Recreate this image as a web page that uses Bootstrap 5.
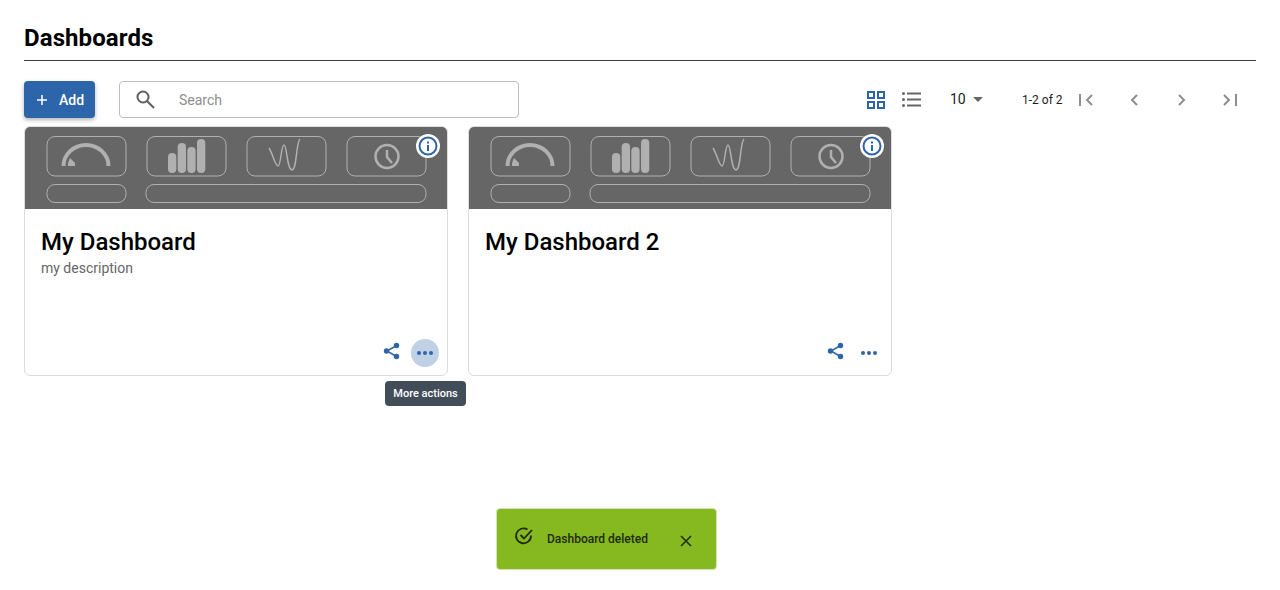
<!DOCTYPE html>
<html lang="en">

<head>
    <meta charset="UTF-8">
    <meta name="viewport" content="width=device-width, initial-scale=1.0">
    <title>Dashboards</title>
    <link href="https://cdn.jsdelivr.net/npm/bootstrap@5.3.0/dist/css/bootstrap.min.css" rel="stylesheet">
    <style>
        body {
            font-family: Roboto, "Liberation Sans", sans-serif;
            background: #fff;
            color: #000;
        }

        .page-wrap {
            padding: 0 24px;
        }

        .page-head {
            height: 61px;
            border-bottom: 1px solid #3c3c3c;
            padding-top: 21px;
        }

        .page-head h1 {
            font-size: 24px;
            line-height: 32px;
            font-weight: 700;
            letter-spacing: .1px;
            margin: 1px 0 0;
        }

        .tool-row {
            margin-top: 20px;
            height: 37px;
            margin-bottom: 8px;
        }

        .add-btn {
            width: 71px;
            height: 37px;
            background: #2c65aa;
            color: #fff;
            border: 0;
            border-radius: 4px;
            font-size: 14px;
            font-weight: 500;
            box-shadow: 0 2px 4px rgba(0, 0, 0, .3);
            gap: 11px;
            padding: 0 0 0 12px;
        }

        .add-btn span,
        .search-box span {
            padding-top: 2px;
        }

        .search-box {
            width: 400px;
            height: 37px;
            margin-left: 24px;
            border: 1px solid #bdbdbd;
            border-radius: 4px;
            padding-left: 15px;
            gap: 23px;
            font-size: 14px;
            color: #8e8e8e;
        }

        .view-group {
            gap: 17px;
        }

        .per-page {
            font-size: 14px;
            color: #212121;
            width: 36px;
            margin-left: 29px;
            gap: 7px;
        }

        .range-text {
            font-size: 12px;
            color: #1c1c1c;
            margin-left: 36px;
            width: 40px;
            white-space: nowrap;
        }

        .pager {
            margin-right: 2px;
        }

        .pager-cell {
            width: 48px;
            height: 37px;
        }

        .tile-row {
            gap: 20px;
        }

        .dash-tile {
            width: 424px;
            height: 250px;
            border: 1px solid #dcdcdc;
            border-radius: 6px;
            position: relative;
            background: #fff;
        }

        .tile-thumb {
            height: 82px;
            background: #666;
            border-radius: 5px 5px 0 0;
            display: block;
        }

        .info-dot {
            position: absolute;
            top: 7px;
            right: 7px;
            width: 24px;
            height: 24px;
        }

        .tile-body {
            padding: 17px 16px 0;
        }

        .tile-body h2 {
            font-size: 24px;
            line-height: 32px;
            font-weight: 500;
            margin: 0;
        }

        .tile-body p {
            font-size: 14px;
            line-height: 20px;
            color: #666;
            margin: 0;
        }

        .tile-actions {
            position: absolute;
            right: 8px;
            bottom: 8px;
            gap: 6px;
        }

        .act-btn {
            width: 28px;
            height: 28px;
            border-radius: 50%;
            border: 0;
            background: transparent;
            padding: 0;
        }

        .act-btn.is-hover {
            background: #c0d1e6;
        }

        .hint-bubble {
            position: fixed;
            left: 385px;
            top: 381px;
            width: 81px;
            height: 25px;
            background: #424d5a;
            color: #fff;
            font-size: 11px;
            font-weight: 500;
            line-height: 25px;
            text-align: center;
            border-radius: 4px;
            white-space: nowrap;
        }

        .snack {
            position: fixed;
            left: 496px;
            top: 508px;
            width: 221px;
            height: 62px;
            background: #86b81f;
            border: 1px solid #d5e2b5;
            border-radius: 4px;
            font-size: 12px;
            font-weight: 500;
            color: #1d2a0c;
        }

        .snack svg {
            position: absolute;
        }

        .snack-check {
            left: 17px;
            top: 17px;
        }

        .snack-close {
            left: 182px;
            top: 25px;
        }

        .snack span {
            position: absolute;
            left: 50px;
            top: 22px;
            line-height: 16px;
        }
    </style>
</head>

<body>
    <svg width="0" height="0" class="d-block position-absolute">
        <defs>
            <g id="thumbArt" fill="none" stroke="#b0b0b0">
                <rect x="22" y="9.500" width="79" height="39.500" rx="8" />
                <rect x="122" y="9.500" width="79" height="39.500" rx="8" />
                <rect x="222" y="9.500" width="79" height="39.500" rx="8" />
                <rect x="322" y="9.500" width="79" height="39.500" rx="8" />
                <rect x="22" y="57.500" width="79" height="18" rx="8" />
                <rect x="121" y="57.500" width="280" height="18" rx="8" />
                <path d="M38.500 39a22.500 21 0 0 1 45 0" stroke-width="4" />
                <path d="M43 39v-3l2-5 5 5v3z" fill="#b0b0b0" stroke="none" />
                <g fill="#b0b0b0" stroke="none">
                    <rect x="143" y="26" width="8.300" height="20" rx="4" />
                    <rect x="152.700" y="16" width="8.300" height="30" rx="4" />
                    <rect x="162.300" y="20" width="8.300" height="26" rx="4" />
                    <rect x="172" y="12" width="8.300" height="34" rx="4" />
                </g>
                <path d="M244 21C248 27 250 39 253 39C256 39 256 18 259 18C262 18 262 43 267 43C272 43 271 15 275 12" stroke-width="1.500" />
                <circle cx="362" cy="29.500" r="11.500" stroke-width="2.500" />
                <path d="M362 23v7l5 6" stroke-width="2.500" />
            </g>
            <g id="infoDot">
                <circle cx="12" cy="12" r="12" fill="#fff" />
                <circle cx="12" cy="12" r="8.500" fill="none" stroke="#2c65aa" stroke-width="2" />
                <rect x="11" y="11" width="2" height="6" fill="#2c65aa" />
                <rect x="11" y="7.500" width="2" height="2" fill="#2c65aa" />
            </g>
            <g id="shareIcon">
                <path d="M14.500 3.500L5 9l9.500 5.500" fill="none" stroke="#2c65aa" stroke-width="1.500" />
                <circle cx="14.500" cy="3.500" r="2.700" fill="#2c65aa" />
                <circle cx="4.500" cy="9" r="2.700" fill="#2c65aa" />
                <circle cx="14.500" cy="14.500" r="2.700" fill="#2c65aa" />
            </g>
            <g id="dotsIcon" fill="#2c65aa">
                <circle cx="3" cy="3" r="2" />
                <circle cx="9" cy="3" r="2" />
                <circle cx="15" cy="3" r="2" />
            </g>
        </defs>
    </svg>

    <div class="page-wrap">
        <div class="page-head">
            <h1>Dashboards</h1>
        </div>

        <div class="tool-row d-flex align-items-center">
            <button class="add-btn d-flex align-items-center" type="button">
                <svg width="12" height="12" viewBox="0 0 12 12"><path d="M6 1v10M1 6h10" stroke="#fff" stroke-width="1.500" /></svg>
                <span>Add</span>
            </button>
            <div class="search-box d-flex align-items-center">
                <svg width="21" height="21" viewBox="0 0 21 21" fill="none" stroke="#5f5f5f" stroke-width="2">
                    <circle cx="8" cy="8" r="5.500" /><path d="M12 12l7 7" />
                </svg>
                <span>Search</span>
            </div>

            <div class="ms-auto d-flex align-items-center">
                <div class="view-group d-flex align-items-center">
                    <svg width="18" height="18" viewBox="0 0 18 18" fill="none" stroke="#2c65aa" stroke-width="2">
                        <rect x="1" y="1" width="6" height="6" /><rect x="11" y="1" width="6" height="6" />
                        <rect x="1" y="11" width="6" height="6" /><rect x="11" y="11" width="6" height="6" />
                    </svg>
                    <svg width="19" height="15" viewBox="0 0 19 15" fill="#666">
                        <circle cx="1.500" cy="1.500" r="1.500" /><circle cx="1.500" cy="7.500" r="1.500" /><circle cx="1.500" cy="13.500" r="1.500" />
                        <rect x="5" y="0.500" width="14" height="2" /><rect x="5" y="6.500" width="14" height="2" /><rect x="5" y="12.500" width="14" height="2" />
                    </svg>
                </div>
                <div class="per-page d-flex align-items-center">
                    <span>10</span>
                    <svg width="10" height="5" viewBox="0 0 10 5"><path d="M0 0h10L5 5z" fill="#666" /></svg>
                </div>
                <div class="range-text">1-2 of 2</div>
                <div class="pager d-flex">
                    <div class="pager-cell d-flex align-items-center justify-content-center">
                        <svg width="14" height="12" viewBox="0 0 14 12" fill="none" stroke="#8e8e8e" stroke-width="2"><path d="M1 0v12M13 1L8 6l5 5" /></svg>
                    </div>
                    <div class="pager-cell d-flex align-items-center justify-content-center">
                        <svg width="8" height="12" viewBox="0 0 8 12" fill="none" stroke="#8e8e8e" stroke-width="2"><path d="M7 1L2 6l5 5" /></svg>
                    </div>
                    <div class="pager-cell d-flex align-items-center justify-content-center">
                        <svg width="8" height="12" viewBox="0 0 8 12" fill="none" stroke="#8e8e8e" stroke-width="2"><path d="M1 1l5 5-5 5" /></svg>
                    </div>
                    <div class="pager-cell d-flex align-items-center justify-content-center">
                        <svg width="14" height="12" viewBox="0 0 14 12" fill="none" stroke="#8e8e8e" stroke-width="2"><path d="M13 0v12M1 1l5 5-5 5" /></svg>
                    </div>
                </div>
            </div>
        </div>

        <div class="tile-row d-flex">
            <div class="dash-tile">
                <svg class="tile-thumb" width="422" height="82" viewBox="0 0 422 82"><use href="#thumbArt" /></svg>
                <svg class="info-dot" viewBox="0 0 24 24"><use href="#infoDot" /></svg>
                <div class="tile-body">
                    <h2>My Dashboard</h2>
                    <p>my description</p>
                </div>
                <div class="tile-actions d-flex">
                    <button class="act-btn" type="button"><svg class="d-block mx-auto" width="19" height="22" viewBox="0 0 19 22"><use href="#shareIcon" /></svg></button>
                    <button class="act-btn is-hover" type="button"><svg class="d-block mx-auto" width="18" height="6" viewBox="0 0 18 6"><use href="#dotsIcon" /></svg></button>
                </div>
            </div>

            <div class="dash-tile">
                <svg class="tile-thumb" width="422" height="82" viewBox="0 0 422 82"><use href="#thumbArt" /></svg>
                <svg class="info-dot" viewBox="0 0 24 24"><use href="#infoDot" /></svg>
                <div class="tile-body">
                    <h2>My Dashboard 2</h2>
                </div>
                <div class="tile-actions d-flex">
                    <button class="act-btn" type="button"><svg class="d-block mx-auto" width="19" height="22" viewBox="0 0 19 22"><use href="#shareIcon" /></svg></button>
                    <button class="act-btn" type="button"><svg class="d-block mx-auto" width="18" height="6" viewBox="0 0 18 6"><use href="#dotsIcon" /></svg></button>
                </div>
            </div>
        </div>
    </div>

    <div class="hint-bubble">More actions</div>

    <div class="snack">
        <svg class="snack-check" width="21" height="21" viewBox="0 0 21 21" fill="none" stroke="#1d2a0c" stroke-width="1.800">
            <path d="M17 9.500a7.500 7.500 0 1 1-3.500-6" /><path d="M6.500 9l3.500 3.500 8-8.500" />
        </svg>
        <span>Dashboard deleted</span>
        <svg class="snack-close" width="14" height="14" viewBox="0 0 14 14" stroke="#1d2a0c" stroke-width="1.500"><path d="M2 2l10 10M12 2L2 12" /></svg>
    </div>

    <script src="https://cdn.jsdelivr.net/npm/bootstrap@5.3.0/dist/js/bootstrap.bundle.min.js"></script>
</body>

</html>
